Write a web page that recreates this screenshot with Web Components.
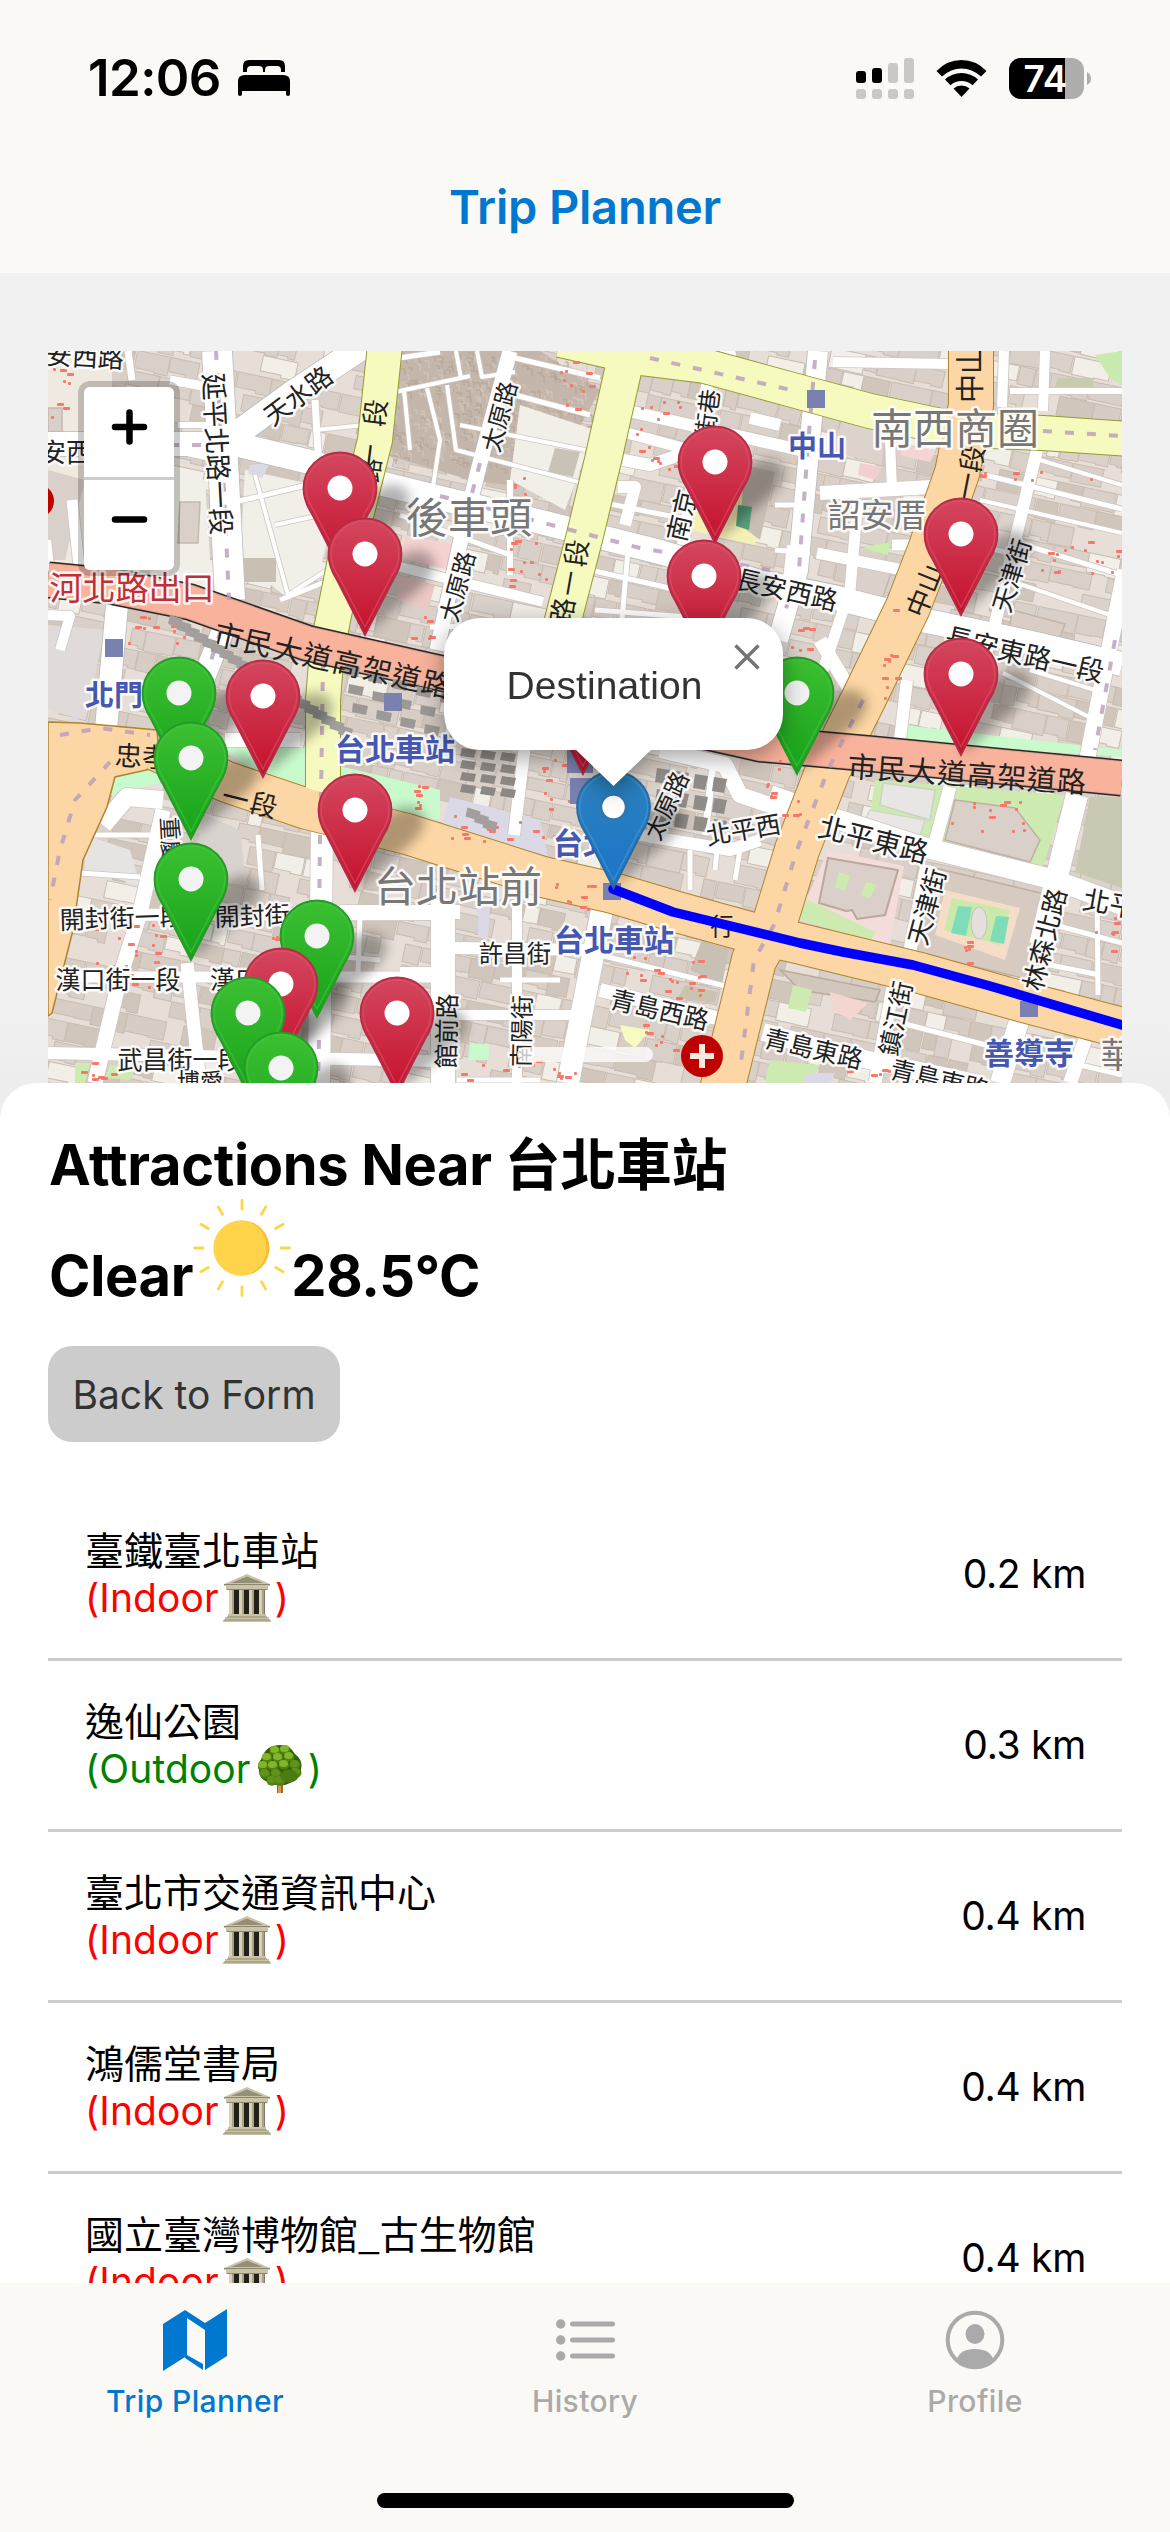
<!DOCTYPE html>
<html lang="en">
<head>
<meta charset="utf-8">
<title>Trip Planner</title>
<style>
html,body{margin:0;padding:0}
body{width:1170px;height:2532px;overflow:hidden;background:#faf9f5;font-family:Inter,"Noto Sans CJK TC",sans-serif;color:#000}
</style>
</head>
<body>
<trip-app></trip-app>
<script>
const define=(name,html,setup)=>customElements.define(name,class extends HTMLElement{
  connectedCallback(){
    if(this.shadowRoot)return;
    const root=this.attachShadow({mode:'open'});
    root.innerHTML=html;
    if(setup)setup(root,this);
  }
});

define('status-bar',`<style>
:host{display:flex;height:138px;flex:none;align-items:center;justify-content:space-between;padding:18px 79px 0 88px;box-sizing:border-box}
.left,.right{display:flex;align-items:center}
.time{font-size:51px;font-weight:600;letter-spacing:-.6px;line-height:60px;width:150px;white-space:nowrap}
.right{gap:22px}
svg{display:block;overflow:visible}
text{font-family:Inter,sans-serif}
</style>
<div class="left"><span class="time">12:06</span>
<svg width="52" height="36" viewBox="0 0 52 36"><path d="M5 12V6Q5 0 11 0H41Q47 0 47 6V12H43V10Q43 6 39 6H31Q27 6 27 10V12H25V10Q25 6 21 6H13Q9 6 9 10V12Z"/><path d="M0 34V21Q0 15 7 15H45Q52 15 52 21V34Q52 36 50 36Q48 36 48 34V31H4V34Q4 36 2 36Q0 36 0 34Z"/></svg></div>
<div class="right">
<svg width="58" height="41" viewBox="0 0 58 41"><g fill="#c9c8c5"><rect x="32" y="5" width="10" height="20" rx="3"/><rect x="48" width="10" height="25" rx="3"/><rect y="31" width="10" height="10" rx="3"/><rect x="16" y="31" width="10" height="10" rx="3"/><rect x="32" y="31" width="10" height="10" rx="3"/><rect x="48" y="31" width="10" height="10" rx="3"/></g><rect y="13" width="10" height="12" rx="3"/><rect x="16" y="10" width="10" height="15" rx="3"/></svg>
<svg width="51" height="37" viewBox="0 0 51 37"><path d="M.5 11Q11 0 25.500 0T50.500 11L45 16.500Q36 8.500 25.500 8.500T6 16.500Z"/><path d="M9 19.500Q16 13 25.500 13T42 19.500L36.500 25.200Q31.500 21 25.500 21T14.500 25.200Z"/><path d="M17.500 28.500Q21 25.500 25.500 25.500T33.500 28.500L25.500 37Z"/></svg>
<svg width="82" height="41" viewBox="0 0 82 41"><defs><clipPath id="b"><rect width="75" height="41" rx="12"/></clipPath></defs><g clip-path="url(#b)"><rect width="75" height="41" fill="#aeaeac"/><rect width="56" height="41"/></g><path d="M78 14Q82 16 82 20.500T78 27Z" fill="#aeaeac"/><text x="36.500" y="34" font-size="37" font-weight="600" fill="#fff" text-anchor="middle" textLength="44">74</text></svg>
</div>`);

define('nav-header',`<style>:host{display:flex;height:135px;flex:none;align-items:center;justify-content:center;font-size:47px;line-height:56px;font-weight:600;color:#0078d0;letter-spacing:-.2px;box-sizing:border-box;padding-top:3px}</style><slot></slot>`);

function mapArt(){
  let seed=7;const rnd=()=>(seed=(seed*16807)%2147483647)/2147483647;
  let s='<rect x="48" y="351" width="1074" height="732" fill="#e6ded7"/>';
  /* building footprints */
  const fills=['#d9d0c9','#d9d0c9','#d7cdc5','#dbd2cb','#d9d0c9','#f2efe9','#d1c6bc'];
  s+='<g transform="rotate(12 585 700)" stroke="#c9bdb2" stroke-width="1">';
  for(let y=220;y<1200;y+=21){let x=-60;while(x<1240){const w=12+rnd()*30,h=15+rnd()*6;
    if(rnd()<.88)s+=`<path d="M${x.toFixed(1)} ${y}h${w.toFixed(1)}v${h.toFixed(1)}h-${(w*.4).toFixed(1)}v${(rnd()*4-3).toFixed(1)}H${x.toFixed(1)}z" fill="${fills[rnd()*7|0]}"/>`;
    x+=w+rnd()*2;}}
  s+='</g>';
  const area=(c,p,st)=>s+=`<polygon points="${p}" fill="${c}"${st?` stroke="${st}" stroke-width="1.500"`:''}/>`;
  /* old-town blocks */
  area('#c4b6aa','395,351 540,351 600,390 545,490 470,480 370,450');
  for(let i=0;i<420;i++){const x=375+rnd()*215,y=353+rnd()*(110+(x-375)*.05);s+=`<path d="M${x.toFixed(0)} ${y.toFixed(0)}h${3+(rnd()*4|0)}v${3+(rnd()*5|0)}" fill="none" stroke="${rnd()<.5?'#d3c8bd':'#b3a396'}"/>`}
  area('#f2efe9','245,470 340,490 320,570 290,600 240,560');
  area('#f2efe9','150,470 205,480 212,590 150,585');area('#d9d0c9','180,502 200,502 198,543 178,543','#c5b8ad');
  area('#c9c0b4','240,558 276,558 276,582 240,582');
  area('#f2efe9','520,405 595,430 565,510 510,480');area('#c9c2b6','555,448 580,452 573,477 548,472');
  area('#f4d2d0','405,535 457,545 448,570 402,558');area('#ebc9c4','398,575 435,585 428,610 398,600');
  area('#f0e9df','48,351 112,351 112,500 100,500 90,570 48,560');area('#d9d0c9','48,408 62,408 62,432 48,432','#c5b8ad');area('#d9d0c9','48,470 85,480 65,560 48,560');area('#e0dbd8','48,625 105,630 85,720 48,710');
  area('#f5f0b4','690,500 770,480 755,545 690,530');area('#cabfb4','745,465 775,472 760,540 740,525');
  area('#5aa181','738,505 752,507 749,530 736,526');
  area('#ddd3cd','845,418 885,428 882,465 828,450');area('#f3d5d4','903,445 936,450 930,462 900,455');area('#f3d0cf','860,463 882,467 875,480 858,475');
  area('#dcd1ca','858,560 892,570 882,600 850,590','#c5b8ad');area('#c8efab','862,548 890,542 888,555');
  area('#c9ebb0','1095,355 1122,351 1122,385 1110,378');area('#c8cbb0','1058,378 1093,378 1093,387 1055,387');
  area('#d9cdc5','1012,610 1065,624 1055,650 1008,640','#c3b5a8');
  area('#c8facc','905,725 945,730 1122,750 1122,757 905,742');
  area('#c8facc','225,748 307,748 307,792 260,778');area('#c8facc','112,770 160,770 160,783 110,795');area('#c8facc','335,765 440,790 440,820 335,800');
  area('#dad9e5','450,797 540,820 550,865 440,830');area('#c8facc','402,785 440,790 420,818 402,812');
  area('#d8d3cf','205,815 240,830 245,875 190,870');area('#e6e4e2','85,835 130,850 140,885 85,870');
  area('#cdebb0','875,780 1065,795 1043,867 935,850 870,815');area('#e8e6e5','883,783 935,790 930,820 880,805','#c9d4be');area('#e9e7e6','870,810 925,820 920,835 865,820','#cfd6c8');
  area('#d9d0c9','955,800 1015,808 1040,840 1030,862 945,840','#bfb0a3');
  area('#c8c8b3','1090,797 1122,797 1122,888 1075,872');
  area('#f3dcda','828,850 904,866 890,945 797,920');area('#cdebb0','808,900 875,932 870,942 795,918');
  s+='<path d="M828 858l70 12-13 45-28 4-5-9-6 1-27-8z" fill="#dad0c9" stroke="#b8a99c" stroke-width="2"/><path d="M839 872l11 4-5 15-10-4zM866 882l11 3-7 13-9-3z" fill="#cdebb0"/>';
  area('#d7cac1','935,868 1045,894 1030,980 915,952','#c0b0a3');area('#f5ddc8','945,890 1020,908 1005,960 935,935');area('#cbe9a9','952,898 1010,910 1000,945 944,930');
  area('#7fdcb8','958,906 972,907 966,936 951,933');area('#7fdcb8','996,916 1009,917 1004,944 990,941');s+='<ellipse cx="979" cy="923" rx="8" ry="16" fill="#e5dfdf" stroke="#c8bfb9"/>';
  area('#c9c0b4','702,940 729,950 722,985 690,970');area('#c9c3b0','685,985 718,992 715,1003 678,998');area('#d2c7bd','780,970 880,990 875,1002 800,990','#b9aa9d');
  area('#cdebb0','793,985 812,990 806,1012 788,1008');area('#f4d6d1','830,992 868,1003 850,1020 832,1010');
  area('#cdebb0','770,1060 820,1065 810,1083 765,1083');area('#dad9e5','808,1073 835,1073 830,1083 802,1083');
  area('#c8facc','470,1043 490,1045 488,1060 468,1060');area('#f7fac1','620,1025 650,1030 635,1048 625,1040');area('#cdebb0','75,1063 90,1063 85,1083 75,1083');
  area('#cdebb0','110,1065 137,1065 130,1080 105,1078');area('#dad9e5','478,905 490,905 488,937 478,937');
  area('#d9d9e8','250,465 270,463 262,478 248,474');area('#dad9e5','65,725 75,715 82,727 82,740');

  /* streets: colour, casing, width, points */
  const road=[];const R=(c,k,w,p)=>road.push([c,k,w,p]);
  const W='#fff',K='#cfc6c2';
  [[4,'395,392 470,376'],[4,'427,388 440,440 433,487'],[4,'447,385 456,450 590,485'],[4,'456,351 461,378'],[4,'477,351 482,377 515,372'],[4,'404,390 410,450'],[5,'515,358 600,378'],[5,'515,395 590,415'],[4,'460,425 585,450'],[4,'315,430 365,425'],[7,'315,400 319,470'],[5,'395,352 385,360 440,352'],[5,'235,502 320,482'],[4,'255,475 288,595 335,565'],[4,'275,525 320,515'],[5,'280,600 330,580'],
   [6,'178,425 220,425'],[8,'178,450 215,458'],[9,'170,380 225,390'],[7,'128,351 132,380'],[11,'72,500 80,575'],[6,'48,540 55,600'],[10,'48,615 70,616 60,650'],
   [10,'400,567 543,602'],[6,'510,480 510,575'],[5,'400,515 510,555'],[5,'430,627 540,625'],[5,'628,550 622,620'],[5,'590,570 700,595'],[5,'595,610 700,618'],
   [12,'633,412 800,450'],[11,'627,433 690,450'],[12,'623,460 650,465 685,453'],[12,'618,487 635,487 625,525'],[12,'750,418 780,425'],[12,'707,385 683,545'],[9,'600,357 615,362'],[12,'720,355 735,351'],[5,'590,500 690,520'],[6,'730,570 790,582'],[6,'790,545 780,630'],
   [10,'833,362 950,364'],[10,'890,440 892,490'],[14,'820,493 932,487'],[11,'817,553 903,570'],[11,'858,500 850,590 823,670'],[11,'892,545 915,545'],[5,'775,505 810,505'],[5,'775,550 810,553'],
   [10,'1004,351 1002,407'],[10,'1045,351 1043,411'],[12,'1037,450 993,632'],[6,'1010,391 1122,391'],[5,'985,475 1122,509'],[4,'1040,460 1122,485'],[4,'980,500 1122,533'],[5,'975,545 1010,553'],[5,'1025,545 1122,575'],[4,'1000,577 1110,615'],[16,'1125,570 1086,765'],[4,'1030,670 1095,690'],[4,'1003,673 1095,720'],[12,'907,680 900,740'],
   [14,'820,640 850,690'],[9,'833,660 850,684'],[22,'1077,795 1040,945'],[13,'950,787 933,850'],[13,'927,865 910,950'],[13,'893,987 875,1083'],[20,'1020,1018 1000,1083'],[20,'770,795 827,816 927,848 1055,880 1122,905'],[5,'1055,925 1122,943'],[5,'1050,965 1100,975'],[5,'1097,890 1098,995'],[18,'763,1032 850,1056 980,1084'],[5,'905,1024 1005,1050'],[14,'1085,1040 1070,1083'],[5,'1060,1060 1122,1075'],
   [14,'600,990 725,1020'],[22,'603,905 568,1083'],[12,'525,745 514,835'],[10,'517,900 517,1083'],[24,'443,900 443,1083'],[14,'340,912 460,912'],[12,'453,948 595,950'],[10,'455,1015 572,1015'],[10,'400,972 442,972'],[22,'322,830 319,1083'],[12,'60,915 440,914'],[11,'55,977 440,977'],[12,'48,1053 440,1061'],[15,'163,810 140,913 120,977 95,1083'],[13,'187,963 200,1083'],[18,'103,825 127,797 163,800'],[5,'85,835 150,835'],[5,'80,873 140,877'],[5,'360,915 358,973'],[5,'320,955 380,960'],[5,'600,955 725,986'],[5,'500,980 560,980'],[12,'640,835 730,850 760,840'],[7,'713,765 705,835'],[16,'660,750 725,765 740,795 800,815'],[5,'717,850 715,870'],[5,'740,850 735,880'],[5,'690,850 690,890'],[5,'457,1080 540,1080'],[5,'258,835 262,890'],[14,'225,740 300,740']
  ].forEach(a=>R(W,K,a[0],a[1]));
  R(W,'#bbb',15,'510,351 480,463 463,530 437,650');
  R(W,'#bbb',20,'818,351 810,440 798,570 778,640');
  R(W,'#bbb',30,'217,351 224,480 230,600');R(W,'#bbb',22,'225,625 203,680 170,730');R(W,'#bbb',22,'117,605 105,740');
  R(W,'#bbb',24,'48,444 235,444 310,462 375,482 440,498 533,520 660,552 760,582 833,597 927,621 1027,642 1122,664');
  R(W,'#bbb',25,'235,435 290,395 365,345');
  const Y='#f6fabf',YK='#939b32',O='#fcd6a4',OK='#ad8430';
  R(Y,YK,34,'385,345 375,440 345,560 327,650 323,700 323,800');
  R(Y,YK,34,'560,340 640,358 705,366 800,392 870,411 960,430 1043,433 1130,439');
  R(Y,YK,36,'625,362 603,460 585,535 563,620 545,690');
  R(O,OK,44,'971,345 971,405 957,473 930,550 908,607 863,700 828,770 797,850 774,925 754,960 722,1090');
  R(O,OK,40,'155,750 227,782 307,809 407,834 543,877 613,893 677,912 753,933 797,943 920,973 1020,1001 1130,1030');
  const line=(c,w,p,x='')=>`<polyline points="${p}" fill="none" stroke="${c}" stroke-width="${w}" stroke-linejoin="round" ${x}/>`;
  road.filter(r=>r[0]==W).forEach(r=>s+=line(r[1],r[2]+1.6,r[3]));road.filter(r=>r[0]==W).forEach(r=>s+=line(r[0],r[2],r[3]));
  area(O,'48,722 80,723 157,730 160,767 115,777 107,807 83,860 73,930 52,1013 48,1016',OK);
  road.filter(r=>r[0]!=W).forEach(r=>s+=line(r[1],r[2]+2,r[3]));road.filter(r=>r[0]!=W).forEach(r=>s+=line(r[0],r[2],r[3]));
  const MW='48,580 110,586 190,602 307,643 440,673 600,708 760,744 873,754 1122,778';
  s+=line('#2e2723',37,MW)+line('#d8a595',34,MW)+line('#f9b29c',32,MW);
  /* one-way and lane marks */
  ['216,351 223,470 229,600','221,630 208,670','815,360 808,445 799,570 782,620','480,463 465,520','323,660 321,800','320,835 319,930','319,1040 318,1083','440,496 640,548 770,570','650,358 800,392','1043,431 1122,436','60,735 100,728 150,735','110,762 75,800 60,850 50,900','863,700 828,770 797,850 774,925 754,960 740,1070','1115,640 1095,750','170,445 205,445'].forEach(p=>s+=line('#b79cbc',4,p,'stroke-dasharray="9 13" opacity=".8"'));
  /* red entrance dots */
  const dots=[[50,365,25,60],[125,615,60,30],[560,360,30,60],[635,400,45,70],[500,475,45,110],[410,600,20,40],[540,750,30,60],[410,785,45,30],[440,820,120,20],[960,470,150,10],[1010,540,110,35],[880,600,18,100],[780,625,35,30],[765,760,35,60],[950,800,80,30],[620,940,80,70],[90,920,70,70],[530,880,60,30],[1095,900,20,60],[640,1010,40,40],[460,1060,120,20],[270,925,30,20],[960,940,20,30],[70,1060,60,20],[830,1060,60,20]];
  dots.forEach(d=>{const n=Math.max(6,d[2]*d[3]/190);for(let i=0;i<n;i++)s+=`<rect x="${(d[0]+rnd()*d[2]).toFixed(0)}" y="${(d[1]+rnd()*d[3]).toFixed(0)}" width="${rnd()<.4?7:3}" height="3" rx="1" fill="#f87768"/>`});
  /* station buildings */
  for(let i=0;i<38;i++){const x=170+i*8.500;const y=615+i*5.500;if(i<21||i>34)s+=`<path d="M${x} ${y}l13 4-2 9-13-4z" fill="#a29f9d"/>`}
  for(let r=0;r<3;r++)for(let i=0;i<5;i++)s+=`<path d="M${345+i*24+r*4} ${665+i*7+r*19}l15 3-2 9-14-3z" fill="#9b9896"/>`;
  for(let r=0;r<4;r++)for(let i=0;i<3;i++){s+=`<path d="M${462+i*20} ${748+r*12+i*2}l14 2-2 8-14-2z" fill="#8c8885"/>`}
  for(let r=0;r<3;r++)for(let i=0;i<4;i++){s+=`<path d="M${657+i*19} ${768+r*21+i*3}l13 2-3 14-12-2z" fill="#918c88"/>`}
  s+='<g fill="#7981b0"><path d="M105 639h18v18h-18zM384 693h18v18h-18zM807 390h18v18h-18zM603 883h18v17h-18zM570 778h26v26h-26zM567 749h26v24h-26zM1020 1001h18v16h-18z"/></g>';
  /* labels: text, x, y, angle, size, colour, weight, length */
  const T=(t,x,y,a=0,z=26,c='#222',w=400,l)=>s+=`<text transform="translate(${x} ${y}) rotate(${a})" text-anchor="middle" dominant-baseline="central" font-size="${z}" fill="${c}" font-weight="${w}" stroke="${c!='#222'||!l?'#fff':'none'}" stroke-opacity=".9" stroke-width="5" stroke-linejoin="round" paint-order="stroke" ${l?`textLength="${l}"`:''}>${t}</text>`;
  T('長安西路',72,354,3);T('安西',66,450);T('延平北路一段',219,454,87,27);T('天水路',297,394,-37,26);
  T('一段',371,435,-83,27,'#222',400,72);T('路',369,470,-83,24,'#222',400,24);
  T('太原路',498,416,-75,24);T('太原路',456,586,-75,24);T('段',575,553,-83,27,'#222',400,27);T('一',568,583,-80,25,'#222',400,25);T('路',561,611,-80,27,'#222',400,27);
  T('街巷',706,413,-83,24);T('南京',680,515,-77,26);T('長安西路',787,588,13,26);T('長安東路一段',1025,653,13,27);
  T('中山',968,374,-90,29,'#222',400,58);T('一段',968,472,-79,27,'#222',400,55);T('中山',923,590,-68,27,'#222',400,54);
  T('天津街',1010,575,-73,25);T('天津街',925,906,-75,26);T('林森北路',1043,939,-76,26);T('鎮江街',894,1018,-78,25);
  T('市民大道高架道路',333,658,13,29,'#222',400,242);T('市民大道高架道路',967,772,4,29,'#222',400,239);
  T('忠孝',142,755,3,27,'#222',400,54);T('一段',250,800,14,27,'#222',400,56);
  T('重慶',172,840,87,23);T('開封街一段',122,916,-2,25);T('開封街',252,914,-2,25);T('漢口街一段',118,978,0,25);T('漢口',235,978,0,25);T('武昌街一段',180,1058,0,25);
  T('館前路',445,1031,-89,25);T('南陽街',520,1031,-89,24);T('許昌街',515,951,0,24);T('青島西路',660,1008,13,25);T('青島東路',814,1047,13,25);T('青島東路',940,1078,13,25);
  T('太原路',665,805,-65,24);T('北平西',743,828,-10,25);T('北平東路',874,838,14,28);T('北平',1110,902,10,27);T('行',722,924,0,24,'#222',400,24);T('博愛',200,1080,0,23);
  T('河北路出口',132,586,0,33,'#bd3038',400);T('後車頭',469,514,0,42,'#777',400);T('南西商圈',955,425,0,42,'#777',400);T('詔安厝',877,513,0,33,'#777',400);T('台北站前',458,883,0,42,'#777',400);T('華',1118,1052,0,35,'#777',400);
  T('北門',114,693,0,29,'#4657b0',700);T('中山',817,444,0,29,'#4657b0',700);T('台北車站',395,747,0,30,'#4657b0',700);T('台北',583,841,0,30,'#4657b0',700);T('台北車站',614,938,0,30,'#4657b0',700);T('善導寺',1029,1051,0,30,'#4657b0',700);
  s+='<circle cx="702" cy="1056" r="21" fill="#bf0000"/><path d="M702 1044v24M690 1056h24" stroke="#f4e9dc" stroke-width="6"/><circle cx="37" cy="501" r="17" fill="#bf0000"/>';
  s+=line('#0000ff',9.5,'613,889 673,912 800,943 843,952 913,965 990,986 1122,1025','stroke-linecap="round"');
  return s;
}

define('city-map',`<style>
:host{display:block;position:relative;width:1074px;height:732px;overflow:hidden}
svg.base{display:block;width:1074px;height:732px;font-family:"Noto Sans CJK TC",sans-serif}
</style><svg class="base" viewBox="48 351 1074 732"></svg><slot></slot>`,root=>{
  const svg=root.querySelector('svg');
  const pins=[['r',340,452],['r',365,518],['r',715,426],['r',704,540],['r',961,498],['r',961,638],['r',263,660],['g',179,657],['g',797,657],['r',583,657],['g',191,722],['g',191,843],['g',317,900],['r',355,774],['r',281,948],['g',248,977],['g',281,1032],['r',397,977],['b',613.5,771]];
  pins.sort((a,b)=>a[2]-b[2]);
  const grad=(id,a,b)=>`<linearGradient id="${id}" x2="0" y2="1"><stop stop-color="${a}"/><stop offset="1" stop-color="${b}"/></linearGradient>`;
  const edge={r:'#b52d44',g:'#249b25',b:'#2a6c9f'},hi={r:'#db5870',g:'#48c446',b:'#4f9bd4'};
  let m='';
  pins.forEach(p=>m+=`<g transform="translate(${p[1]} ${p[2]})"><path d="M0 117L38 84Q80 54 66 38Q52 26 30 42Q16 50 0 117Z" fill="#000" opacity=".3" filter="url(#s)"/></g>`);
  pins.forEach(p=>m+=`<g transform="translate(${p[1]} ${p[2]})"><path d="M0 117L-28 62Q-36.500 49 -36.500 36A36.500 35.500 0 0 1 36.500 36Q36.500 49 28 62Z" fill="url(#${p[0]})" stroke="${edge[p[0]]}" stroke-width="1.800"/><path d="M0 109L-26 59Q-34 47 -34 36A34 33 0 0 1 34 36Q34 47 26 59Z" fill="none" stroke="${hi[p[0]]}" stroke-width="1.500" opacity=".55"/><circle cy="36" r="12.500" fill="${p[0]=='g'?'#f3f3f3':'#fff'}" ${p[0]=='b'?'stroke="#3177ad" stroke-width="2.500"':''}/></g>`);
  svg.innerHTML=`<defs>${grad('r','#d4475f','#c5102c')}${grad('g','#3cc032','#17a21a')}${grad('b','#2b82be','#1b74c8')}<filter id="s" x="-30%" y="-30%" width="160%" height="160%"><feGaussianBlur stdDeviation="6"/></filter></defs>`+mapArt()+m;
});

define('zoom-control',`<style>
:host{position:absolute;left:30px;top:30px;display:flex;flex-direction:column;border:6px solid rgba(0,0,0,.2);border-radius:12px;background-clip:padding-box}
div{width:90px;height:90px;background:#fff;display:flex;align-items:center;justify-content:center}
.in{border-bottom:3px solid #ccc;border-radius:6px 6px 0 0}.out{border-radius:0 0 6px 6px}
svg{display:block;stroke:#000;stroke-width:6.500;stroke-linecap:round}
</style><div class="in"><svg width="90" height="90"><path d="M45.500 25.500v29M31 40h29"/></svg></div><div class="out"><svg width="90" height="90"><path d="M31 39.500h29"/></svg></div>`);

define('map-popup',`<style>
:host{position:absolute;left:396px;top:267px;width:339px;height:132px;filter:drop-shadow(0 7px 12px rgba(0,0,0,.38))}
.box{box-sizing:border-box;height:132px;border-radius:36px;background:#fff;display:flex;align-items:center;justify-content:center;font:39px "Liberation Sans",sans-serif;letter-spacing:.1px;color:#333;padding:4px 18px 0 0}
.tip{position:absolute;left:131px;top:131px}.close{position:absolute;left:290px;top:26px}
svg{display:block}
</style><div class="box"><slot></slot></div><svg class="tip" width="77" height="38"><path d="M0 0H77L38.500 37Z" fill="#fff"/></svg><svg class="close" width="26" height="26"><path d="M1.500 1.500L24.500 24.500M24.500 1.500L1.500 24.500" stroke="#757575" stroke-width="3.500"/></svg>`);

define('sheet-handle',`<style>:host{position:absolute;left:469px;top:696px;width:136px;height:15px;border-radius:8px;background:rgba(255,255,255,.75)}</style>`);

define('sun-icon',`<style>:host{display:block;width:98px;height:98px}</style><svg width="98" height="98" viewBox="-49 -49 98 98"></svg>`,root=>{
  let r='';for(let i=0;i<12;i++)r+=`<path transform="rotate(${i*30})" d="M0-39V-47.500" stroke="#ffd34a" stroke-width="2.800" stroke-linecap="round"/>`;
  root.querySelector('svg').innerHTML=r+'<circle r="27.500" fill="#ffbd30"/><path d="M4-27A27.500 27.500 0 1 0 4 27A28 28 0 0 0 4-27Z" fill="#ffd34a"/>';
});

const temple=`<svg width="48" height="48" viewBox="0 0 48 48"><path d="M6 16H42V41H6Z" fill="#807b66"/><path d="M10 16h6v24h-6zM20 16h6v24h-6zM30 16h7v24h-7z" fill="#22201b"/><path d="M6 16h5v24H6zM16 16h5v24h-5zM26 16h5v24h-5zM36 16h5v24h-5z" fill="#d8d2b6"/><path d="M9 16h2v24H9zM19 16h2v24h-2zM29 16h2v24h-2zM39 16h2v24h-2z" fill="#aaa286"/><path d="M1 10L24 0L47 10V12H45V16H3V12H1Z" fill="#c9c3a8"/><path d="M8 9L24 2.500L40 9Z" fill="#958f78"/><path d="M1 10.500H47M4 15.500H44" stroke="#8d866c"/><path d="M5 40H43V43H46V46H48V48H0V46H2V43H5Z" fill="#c9c2a5"/><path d="M4 43H44M1 46H47" stroke="#908970"/></svg>`;
const tree=(()=>{let s='<path d="M19 36h6v12h-6z" fill="#9a6b2f"/><path d="M20 40h3v8h-3z" fill="#d39b50"/><path d="M22 0C33 0 34 6 38 10C44 15 44 20 43 24C43 32 38 36 32 38Q22 43 13 38C4 36 1 31 1 25C-1 19 2 16 4 13C7 3 14 0 22 0Z" fill="#335f0c"/>';
[[17,5],[27,4],[9,12],[20,12],[31,11],[5,20],[15,20],[26,19],[37,19],[7,28],[18,28],[38,27],[14,35],[22,35]].forEach(([x,y])=>s+=`<ellipse cx="${x}" cy="${y+1}" rx="5.500" ry="4.700" fill="#4f8212"/><ellipse cx="${x-.5}" cy="${y-.5}" rx="4.500" ry="3.500" fill="${y<22&&x<33?'#82b528':'#5f931a'}"/>`);
return `<svg width="44" height="48" viewBox="0 0 44 48">${s}<ellipse cx="31" cy="31" rx="9" ry="6.500" fill="#4b7c13"/></svg>`})();

define('attraction-row',`<style>
:host{display:flex;align-items:center;justify-content:space-between;height:168px;flex:none;padding:0 36px;border-bottom:3px solid #ccc;font-size:39px;line-height:48px}
.info{display:flex;flex-direction:column;padding-left:1px}
.name{font-family:"Noto Sans CJK TC",sans-serif;height:48px;line-height:44px;white-space:nowrap}
.kind{display:flex;height:48px;letter-spacing:.1px}
:host([kind=Indoor]) .kind{color:#f00}:host([kind=Outdoor]) .kind{color:#008000}
.ico{margin:0 4px 0 4px;display:block;width:48px}
:host([kind=Outdoor]) .ico{margin:0 6px 0 7px;width:44px}
.dist{letter-spacing:-.3px}
svg{display:block}
</style><div class="info"><div class="name"><slot></slot></div><div class="kind"><span class="k"></span><span class="ico"></span><span>)</span></div></div><div class="dist"></div>`,(root,el)=>{
  const k=el.getAttribute('kind');
  root.querySelector('.k').textContent='('+k;
  root.querySelector('.ico').innerHTML=k=='Indoor'?temple:tree;
  root.querySelector('.dist').textContent=el.getAttribute('distance');
});

define('attraction-sheet',`<style>
:host{display:flex;flex-direction:column;flex:1;min-height:0;overflow:hidden;background:#fff;border-radius:36px 36px 0 0;padding:0 48px;box-sizing:border-box}
.h{font-size:56px;font-weight:700;line-height:66px;white-space:nowrap}
.title{margin-top:49px;letter-spacing:-.35px;padding-left:1px}
.weather{display:flex;align-items:flex-end;height:98px;margin-top:1px;letter-spacing:-.3px;padding-left:1px}
.weather span{line-height:60px;margin-bottom:-9px}
button{align-self:flex-start;margin:49px 0 48px;width:292px;height:96px;flex:none;border:0;border-radius:24px;background:#ccc;color:#333;font:39px Inter,sans-serif;padding:0;white-space:nowrap}
</style><div class="h title">Attractions Near 台北車站</div><div class="h weather"><span>Clear</span><sun-icon></sun-icon><span>28.5°C</span></div><button>Back to Form</button><slot></slot>`);

define('tab-item',`<style>
:host{display:flex;flex-direction:column;align-items:center;flex:1;color:#aaa;font-size:30px;font-weight:500;line-height:36px;letter-spacing:.4px}
:host([active]){color:#0078d0}
.i{height:64px;margin:25px 0 11px;display:flex;align-items:center}svg{display:block;fill:currentColor}
</style><div class="i"></div><slot></slot>`,(root,el)=>{
  root.querySelector('.i').innerHTML={
  map:'<svg width="64" height="64" viewBox="0 0 64 64"><path d="M0 16L22 2V49L0 63ZM42 15L64 1V48L42 62ZM22 2L42 15V22L24 10V47L40 56V62L22 50Z"/></svg>',
  list:'<svg width="59" height="44" viewBox="0 0 59 44"><circle cx="4.700" cy="6" r="4.700"/><circle cx="4.700" cy="22" r="4.700"/><circle cx="4.700" cy="38" r="4.700"/><rect x="14" y="3.500" width="45" height="5" rx="2.500"/><rect x="14" y="19.500" width="45" height="5" rx="2.500"/><rect x="14" y="35.500" width="45" height="5" rx="2.500"/></svg>',
  user:'<svg width="60" height="60" viewBox="0 0 60 60"><circle cx="30" cy="30" r="27.300" fill="none" stroke="currentColor" stroke-width="4"/><ellipse cx="30" cy="24" rx="9.500" ry="10"/><path d="M12 49Q15 39 30 39T48 49Q40 57 30 57T12 49Z"/></svg>'}[el.getAttribute('icon')];
});
define('tab-bar',`<style>:host{display:flex;flex-direction:column;height:249px;flex:none;background:#faf9f5}.tabs{display:flex;height:210px;flex:none}.home{width:417px;height:15px;border-radius:8px;background:#000;align-self:center}</style><div class="tabs"><slot></slot></div><div class="home"></div>`);

define('trip-app',`<style>
:host{display:flex;flex-direction:column;width:1170px;height:2532px;background:#faf9f5;overflow:hidden}
main{display:flex;flex-direction:column;height:2010px;flex:none;background:#ededed}
.stage{padding:78px 48px 0;background:linear-gradient(#f1f1f1 92%,#ededed)}
</style><status-bar></status-bar><nav-header>Trip Planner</nav-header>
<main><div class="stage"><city-map><zoom-control></zoom-control><map-popup>Destination</map-popup><sheet-handle></sheet-handle></city-map></div>
<attraction-sheet>
<attraction-row kind="Indoor" distance="0.2 km">臺鐵臺北車站</attraction-row>
<attraction-row kind="Outdoor" distance="0.3 km">逸仙公園</attraction-row>
<attraction-row kind="Indoor" distance="0.4 km">臺北市交通資訊中心</attraction-row>
<attraction-row kind="Indoor" distance="0.4 km">鴻儒堂書局</attraction-row>
<attraction-row kind="Indoor" distance="0.4 km">國立臺灣博物館_古生物館</attraction-row>
</attraction-sheet></main>
<tab-bar><tab-item icon="map" active>Trip Planner</tab-item><tab-item icon="list">History</tab-item><tab-item icon="user">Profile</tab-item></tab-bar>`);
</script>
</body>
</html>
